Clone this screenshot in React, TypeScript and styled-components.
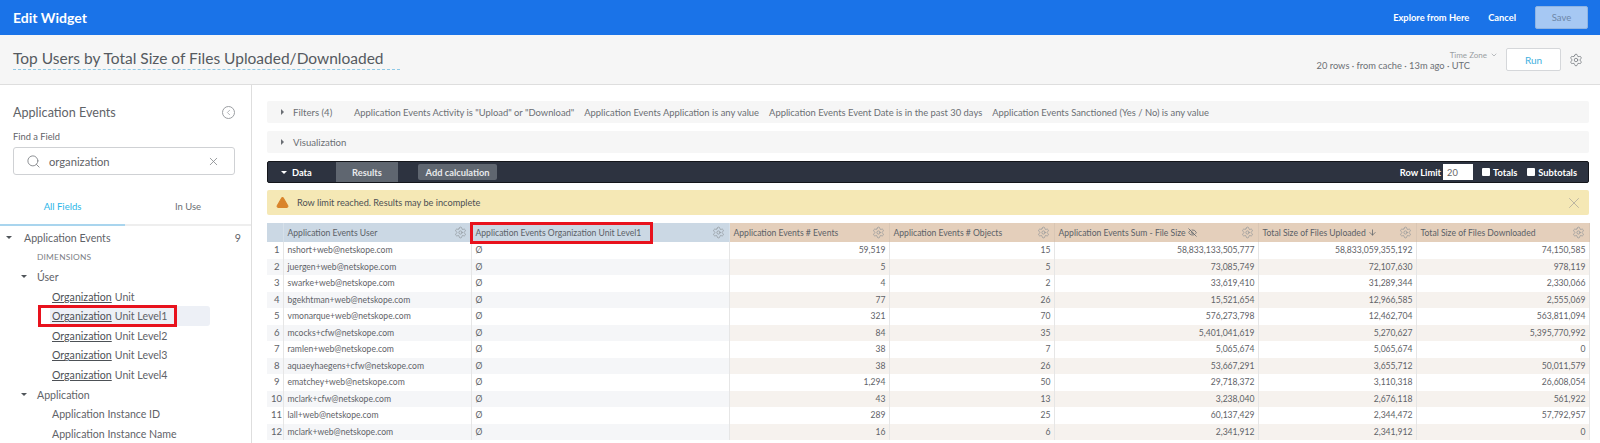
import React from 'react';
import styled, { createGlobalStyle } from 'styled-components';
import { Search, X, Settings, ChevronDown, EyeOff, ArrowDown, TriangleAlert, ChevronLeft } from 'lucide-react';

const GlobalStyle = createGlobalStyle`
  html, body {
    margin: 0;
    padding: 0;
    background: #fff;
    font-family: Lato, "Open Sans", sans-serif;
    color: #5f6368;
  }
  * { box-sizing: border-box; }
`;

const Page = styled.div`
  width: 1600px;
  height: 443px;
  overflow: hidden;
  display: flex;
  flex-direction: column;
`;

const TopBar = styled.header`
  height: 35px;
  flex: none;
  background: #1a73e8;
  display: flex;
  align-items: center;
  padding: 0 12px 0 13px;
  color: #fff;
`;

const TopTitle = styled.div`
  font-size: 14px;
  font-weight: 700;
  flex: 1;
`;

const TopLink = styled.span`
  font-size: 9.3px;
  font-weight: 700;
  margin-right: 19px;
`;

const SaveButton = styled.button`
  width: 53px;
  height: 23px;
  background: #a6c8f3;
  border: 1px solid #8fb4e2;
  border-radius: 2px;
  color: #6d87a8;
  font: 9.5px Lato, sans-serif;
`;

const TitleBar = styled.div`
  height: 50px;
  flex: none;
  background: #f6f6f6;
  border-bottom: 1px solid #dedede;
  display: flex;
  align-items: center;
  padding: 0 17px 0 13px;
`;

const WidgetTitle = styled.div`
  font-size: 15.5px;
  color: #555a60;
  width: 387px;
  line-height: 21px;
  margin-top: -1px;
  border-bottom: 1px dashed #8fc9e6;
  flex: none;
  white-space: nowrap;
`;

const Meta = styled.div`
  margin-left: auto;
  display: flex;
  flex-direction: column;
  align-items: flex-end;
  margin-right: 36px;
`;

const TimeZone = styled.div`
  font-size: 8px;
  color: #9a9ea3;
  display: flex;
  align-items: center;
  gap: 3px;
  margin-right: -28px;
  line-height: 9px;
  margin-top: 3px;
`;

const MetaText = styled.div`
  font-size: 9.3px;
  color: #6b6f74;
  line-height: 12px;
`;

const RunButton = styled.button`
  width: 55px;
  height: 23px;
  background: #fff;
  border: 1px solid #d5d7da;
  border-radius: 2px;
  color: #3fb0e0;
  font: 10px Lato, sans-serif;
  margin-right: 8px;
`;

const Body = styled.div`
  flex: 1;
  display: flex;
  min-height: 0;
`;

const Sidebar = styled.aside`
  width: 252px;
  flex: none;
  border-right: 1px solid #dedede;
  display: flex;
  flex-direction: column;
  & > * { flex: none; }
`;

const SidebarHead = styled.div`
  display: flex;
  align-items: center;
  justify-content: space-between;
  padding: 19px 16px 0 13px;
`;

const SidebarTitle = styled.div`
  font-size: 12.6px;
  color: #5f6368;
  line-height: 18px;
`;

const CollapseIcon = styled.span`
  width: 13px;
  height: 13px;
  border: 1px solid #9b9ea2;
  border-radius: 50%;
  display: flex;
  align-items: center;
  justify-content: center;
  color: #9b9ea2;
  margin-top: -2px;
`;

const FieldLabel = styled.div`
  font-size: 9.3px;
  color: #5f6368;
  margin: 8px 0 0 13px;
  line-height: 14px;
`;

const SearchBox = styled.div`
  margin: 3px 16px 0 13px;
  height: 28px;
  border: 1px solid #cfd1d4;
  border-radius: 3px;
  display: flex;
  align-items: center;
  padding: 0 14px 0 12px;
  font-size: 11.2px;
  color: #5f6368;
  gap: 8px;
  background: #fff;
`;

const SearchValue = styled.span`
  flex: 1;
`;

const Tabs = styled.div`
  display: flex;
  margin-top: 23px;
  height: 28px;
`;

const Tab = styled.div<{ $active?: boolean }>`
  width: 125px;
  flex: none;
  text-align: center;
  font-size: 9.5px;
  line-height: 18px;
  color: ${({ $active }) => ($active ? '#2ab5e8' : '#6b6f74')};
  border-bottom: 2px solid ${({ $active }) => ($active ? '#a9d5ee' : '#eeeeee')};
  &:last-child { flex: 1; }
`;

const Tree = styled.div`
  padding-top: 2px;
`;

const TreeRow = styled.div<{ $indent: number; $selected?: boolean }>`
  position: relative;
  height: 19.6px;
  display: flex;
  align-items: center;
  font-size: 10.6px;
  color: #5f6368;
  padding-left: ${({ $indent }) => $indent}px;
  margin-right: ${({ $selected }) => ($selected ? '41px' : '0')};
  margin-left: ${({ $selected }) => ($selected ? '50px' : '0')};
  border-radius: 3px;
  background: ${({ $selected }) => ($selected ? '#edf0f6' : 'transparent')};
`;

const Caret = styled.span<{ $light?: boolean }>`
  width: 0;
  height: 0;
  border-left: 3px solid transparent;
  border-right: 3px solid transparent;
  border-top: 3px solid ${({ $light }) => ($light ? '#ffffff' : '#50555a')};
  flex: none;
`;

const RowLabel = styled.span<{ $gap?: number }>`
  margin-left: ${({ $gap }) => $gap ?? 0}px;
`;

const Count = styled.span`
  margin-left: auto;
  margin-right: 10px;
`;

const GroupLabel = styled.span`
  font-size: 8.4px;
  letter-spacing: 0.2px;
  color: #7c8085;
`;

const Match = styled.span`
  text-decoration: underline;
  text-underline-offset: 1px;
  color: #4d5156;
`;

const FieldHighlight = styled.span`
  position: absolute;
  left: -12px;
  right: 33px;
  top: -1px;
  bottom: -1px;
  border: 3px solid #e8121d;
  pointer-events: none;
`;

const Main = styled.main`
  flex: 1;
  min-width: 0;
  padding: 16px 11px 0 15px;
  display: flex;
  flex-direction: column;
`;

const FoldBar = styled.div<{ $mb: number }>`
  height: 22px;
  flex: none;
  background: #f6f6f6;
  border-radius: 2px;
  display: flex;
  align-items: center;
  padding-left: 14px;
  margin-bottom: ${({ $mb }) => $mb}px;
  font-size: 9.4px;
  color: #6b6f74;
  white-space: nowrap;
`;

const SideCaret = styled.span`
  width: 0;
  height: 0;
  border-top: 3px solid transparent;
  border-bottom: 3px solid transparent;
  border-left: 3px solid #6b6f74;
  margin-right: 9px;
`;

const FoldLabel = styled.span`
  font-size: 9.6px;
  width: 61px;
`;

const FilterText = styled.span`
  margin-right: 10px;
`;

const DataBar = styled.div`
  height: 22px;
  flex: none;
  background: #2d3340;
  border: 1px solid #14161b;
  border-radius: 2px;
  display: flex;
  align-items: center;
  color: #fff;
  font-size: 9.3px;
  font-weight: 700;
  margin-bottom: 7px;
`;

const DataLabel = styled.div`
  width: 68px;
  display: flex;
  align-items: center;
  gap: 5px;
  padding-left: 13px;
`;

const ResultsTab = styled.div`
  width: 62px;
  align-self: stretch;
  background: #5f6670;
  color: #e8e9eb;
  display: flex;
  align-items: center;
  justify-content: center;
`;

const AddCalc = styled.div`
  margin-left: 20px;
  width: 79px;
  height: 16px;
  background: #5f6670;
  color: #e8e9eb;
  border-radius: 2px;
  display: flex;
  align-items: center;
  justify-content: center;
`;

const RowLimit = styled.div`
  margin-left: auto;
  display: flex;
  align-items: center;
  padding-right: 11px;
`;

const LimitInput = styled.div`
  width: 30px;
  height: 16px;
  margin: 0 9px 0 2px;
  background: #fff;
  color: #666;
  font-weight: 400;
  padding-left: 4px;
  line-height: 17px;
`;

const Check = styled.span`
  width: 8px;
  height: 8px;
  background: #fff;
  border-radius: 1px;
  margin-right: 3px;
`;

const CheckLabel = styled.span`
  margin-right: 10px;
  &:last-child { margin-right: 0; }
`;

const WarningBar = styled.div`
  height: 25px;
  flex: none;
  background: #f5e8b5;
  border-radius: 2px;
  display: flex;
  align-items: center;
  padding: 0 6px 0 9px;
  font-size: 9.2px;
  color: #4e5154;
  margin-bottom: 8px;
`;

const WarningText = styled.span`
  flex: 1;
  margin-left: 8px;
`;

const ResultTable = styled.table`
  border-collapse: collapse;
  table-layout: fixed;
  width: 1322px;
  font-size: 8.6px;
`;

const HeadCell = styled.th<{ $tone: 'dim' | 'measure' }>`
  position: relative;
  height: 19px;
  padding: 0 4px;
  text-align: left;
  font-weight: 400;
  color: #5b6167;
  white-space: nowrap;
  background: ${({ $tone }) => ($tone === 'dim' ? '#cbd8e4' : '#e4cfbb')};
  border-right: 1px solid ${({ $tone }) => ($tone === 'dim' ? '#d6e0e9' : '#d9c6b4')};
`;

const HeadContent = styled.div`
  display: flex;
  align-items: center;
  justify-content: space-between;
  color: #5b6167;
`;

const HeadName = styled.span`
  display: flex;
  align-items: center;
  gap: 2px;
`;

const CellHighlight = styled.span`
  position: absolute;
  left: -2px;
  top: -1px;
  width: 183px;
  height: 22px;
  border: 3px solid #e8121d;
  pointer-events: none;
`;

const Row = styled.tr<{ $stripe: boolean }>`
  height: 16.5px;
  & > td { background: #fff; }
  & > td.dim { background: ${({ $stripe }) => ($stripe ? '#f5f6f8' : '#fff')}; }
  & > td.index { background: ${({ $stripe }) => ($stripe ? '#f5f6f8' : '#fff')}; font-size: 9.6px; }
  & > td.measure { background: ${({ $stripe }) => ($stripe ? '#f6f2ee' : '#fff')}; }
`;

const Cell = styled.td<{ $align?: string }>`
  padding: 0 3px 0 4px;
  text-align: ${({ $align }) => $align ?? 'left'};
  white-space: nowrap;
  overflow: hidden;
  border-right: 1px solid #e6e6e6;
  line-height: 14px;
  color: #5f6368;
`;

const columnWidths = [16, 188, 258, 160, 165, 204, 158, 173];

const headers = [
  { name: 'Application Events User', tone: 'dim' as const },
  { name: 'Application Events Organization Unit Level1', tone: 'dim' as const, marked: true },
  { name: 'Application Events # Events', tone: 'measure' as const },
  { name: 'Application Events # Objects', tone: 'measure' as const },
  { name: 'Application Events Sum - File Size', tone: 'measure' as const, hidden: true },
  { name: 'Total Size of Files Uploaded', tone: 'measure' as const, sorted: true },
  { name: 'Total Size of Files Downloaded', tone: 'measure' as const },
];

const rows = [
  ['nshort+web@netskope.com', '59,519', '15', '58,833,133,505,777', '58,833,059,355,192', '74,150,585'],
  ['juergen+web@netskope.com', '5', '5', '73,085,749', '72,107,630', '978,119'],
  ['swarke+web@netskope.com', '4', '2', '33,619,410', '31,289,344', '2,330,066'],
  ['bgekhtman+web@netskope.com', '77', '26', '15,521,654', '12,966,585', '2,555,069'],
  ['vmonarque+web@netskope.com', '321', '70', '576,273,798', '12,462,704', '563,811,094'],
  ['mcocks+cfw@netskope.com', '84', '35', '5,401,041,619', '5,270,627', '5,395,770,992'],
  ['ramlen+web@netskope.com', '38', '7', '5,065,674', '5,065,674', '0'],
  ['aquaeyhaegens+cfw@netskope.com', '38', '26', '53,667,291', '3,655,712', '50,011,579'],
  ['ematchey+web@netskope.com', '1,294', '50', '29,718,372', '3,110,318', '26,608,054'],
  ['mclark+cfw@netskope.com', '43', '13', '3,238,040', '2,676,118', '561,922'],
  ['lall+web@netskope.com', '289', '25', '60,137,429', '2,344,472', '57,792,957'],
  ['mclark+web@netskope.com', '16', '6', '2,341,912', '2,341,912', '0'],
];

const filters = [
  'Application Events Activity is "Upload" or "Download"',
  'Application Events Application is any value',
  'Application Events Event Date is in the past 30 days',
  'Application Events Sanctioned (Yes / No) is any value',
];

const orgLevels = ['Unit', 'Unit Level1', 'Unit Level2', 'Unit Level3', 'Unit Level4'];

export default function App() {
  return (
    <Page>
      <GlobalStyle />
      <TopBar>
        <TopTitle>Edit Widget</TopTitle>
        <TopLink>Explore from Here</TopLink>
        <TopLink>Cancel</TopLink>
        <SaveButton>Save</SaveButton>
      </TopBar>
      <TitleBar>
        <WidgetTitle>Top Users by Total Size of Files Uploaded/Downloaded</WidgetTitle>
        <Meta>
          <TimeZone>
            Time Zone <ChevronDown size={8} />
          </TimeZone>
          <MetaText>20 rows · from cache · 13m ago · UTC</MetaText>
        </Meta>
        <RunButton>Run</RunButton>
        <Settings size={14} color="#7b7f84" strokeWidth={1.4} />
      </TitleBar>
      <Body>
        <Sidebar>
          <SidebarHead>
            <SidebarTitle>Application Events</SidebarTitle>
            <CollapseIcon>
              <ChevronLeft size={9} />
            </CollapseIcon>
          </SidebarHead>
          <FieldLabel>Find a Field</FieldLabel>
          <SearchBox>
            <Search size={15} color="#85898d" strokeWidth={1.5} />
            <SearchValue>organization</SearchValue>
            <X size={13} color="#85898d" strokeWidth={1.5} />
          </SearchBox>
          <Tabs>
            <Tab $active>All Fields</Tab>
            <Tab>In Use</Tab>
          </Tabs>
          <Tree>
            <TreeRow $indent={6}>
              <Caret />
              <RowLabel $gap={12}>Application Events</RowLabel>
              <Count>9</Count>
            </TreeRow>
            <TreeRow $indent={37}>
              <GroupLabel>DIMENSIONS</GroupLabel>
            </TreeRow>
            <TreeRow $indent={21}>
              <Caret />
              <RowLabel $gap={10}>Úser</RowLabel>
            </TreeRow>
            {orgLevels.map((level, i) => (
              <TreeRow key={level} $indent={i === 1 ? 2 : 52} $selected={i === 1}>
                <Match>Organization</Match>
                <RowLabel $gap={3}>{level}</RowLabel>
                {i === 1 && <FieldHighlight />}
              </TreeRow>
            ))}
            <TreeRow $indent={21}>
              <Caret />
              <RowLabel $gap={10}>Application</RowLabel>
            </TreeRow>
            <TreeRow $indent={52}>Application Instance ID</TreeRow>
            <TreeRow $indent={52}>Application Instance Name</TreeRow>
          </Tree>
        </Sidebar>
        <Main>
          <FoldBar $mb={8}>
            <SideCaret />
            <FoldLabel>Filters (4)</FoldLabel>
            {filters.map(f => (
              <FilterText key={f}>{f}</FilterText>
            ))}
          </FoldBar>
          <FoldBar $mb={8}>
            <SideCaret />
            <FoldLabel>Visualization</FoldLabel>
          </FoldBar>
          <DataBar>
            <DataLabel>
              <Caret $light />
              Data
            </DataLabel>
            <ResultsTab>Results</ResultsTab>
            <AddCalc>Add calculation</AddCalc>
            <RowLimit>
              Row Limit
              <LimitInput>20</LimitInput>
              <Check />
              <CheckLabel>Totals</CheckLabel>
              <Check />
              <CheckLabel>Subtotals</CheckLabel>
            </RowLimit>
          </DataBar>
          <WarningBar>
            <TriangleAlert size={13} fill="#d9842b" color="#d9842b" />
            <WarningText>Row limit reached. Results may be incomplete</WarningText>
            <X size={18} color="#a9a69a" strokeWidth={1} />
          </WarningBar>
          <ResultTable>
            <colgroup>
              {columnWidths.map((w, i) => (
                <col key={i} width={w} />
              ))}
            </colgroup>
            <thead>
              <tr>
                <HeadCell $tone="dim" />
                {headers.map(h => (
                  <HeadCell key={h.name} $tone={h.tone}>
                    <HeadContent>
                      <HeadName>
                        {h.name}
                        {h.hidden && <EyeOff size={9} />}
                        {h.sorted && <ArrowDown size={9} />}
                      </HeadName>
                      <Settings size={13} color="#8a8f94" strokeWidth={1.2} />
                    </HeadContent>
                    {h.marked && <CellHighlight />}
                  </HeadCell>
                ))}
              </tr>
            </thead>
            <tbody>
              {rows.map((r, i) => (
                <Row key={i} $stripe={i % 2 === 1}>
                  <Cell className="index" $align="right">
                    {i + 1}
                  </Cell>
                  <Cell className="dim">{r[0]}</Cell>
                  <Cell className="dim">Ø</Cell>
                  {r.slice(1).map((v, j) => (
                    <Cell key={j} className="measure" $align="right">
                      {v}
                    </Cell>
                  ))}
                </Row>
              ))}
            </tbody>
          </ResultTable>
        </Main>
      </Body>
    </Page>
  );
}
